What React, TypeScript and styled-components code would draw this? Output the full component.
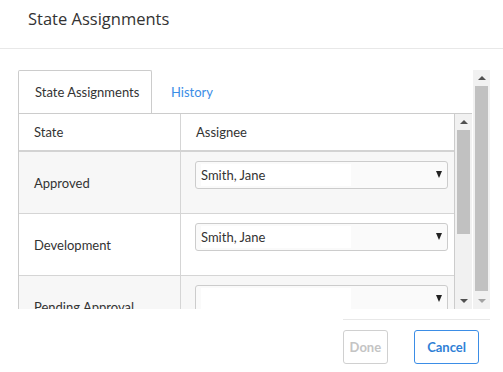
import React from 'react'
import styled, { createGlobalStyle } from 'styled-components'

const GlobalStyle = createGlobalStyle`
    html, body {
        margin: 0;
        padding: 0;
        background: #ffffff;
    }
    body {
        font-family: Lato, 'Liberation Sans', sans-serif;
        color: #333333;
    }
`

const Dialog = styled.div`
    width: 503px;
    height: 372px;
    display: flex;
    flex-direction: column;
    overflow: hidden;
`

const Header = styled.div`
    height: 49px;
    border-bottom: 1px solid #e8e8e8;
    display: flex;
    align-items: center;
    padding-left: 28px;
    padding-bottom: 12px;
    box-sizing: border-box;
`

const Title = styled.h1`
    margin: 0;
    font-family: 'Open Sans', sans-serif;
    font-size: 16.5px;
    font-weight: 400;
    color: #333333;
`

const Body = styled.div`
    display: flex;
    gap: 1px;
    padding: 21px 13px 0 18px;
    height: 239px;
    overflow: hidden;
`

const Panel = styled.div`
    display: flex;
    flex-direction: column;
    width: 454px;
`

const TabRow = styled.div`
    display: flex;
    height: 43px;
    flex-shrink: 0;
`

const Tab = styled.div<{ $active?: boolean }>`
    display: flex;
    align-items: center;
    white-space: nowrap;
    padding: ${(p) => (p.$active ? '0 0 0 16px' : '0 19px')};
    width: ${(p) => (p.$active ? '134px' : 'auto')};
    box-sizing: border-box;
    font-size: 13px;
    color: ${(p) => (p.$active ? '#333333' : '#3b8de6')};
    background: #ffffff;
    border: ${(p) => (p.$active ? '1px solid #cccccc' : 'none')};
    border-bottom: none;
    border-radius: 2px 2px 0 0;
`

const TableArea = styled.div`
    display: flex;
    flex: 1;
    min-height: 0;
    border-top: 1px solid #cccccc;
`

const Table = styled.div`
    width: 437px;
    border-left: 1px solid #cccccc;
    border-right: 1px solid #cccccc;
    box-sizing: border-box;
    overflow: hidden;
`

const Row = styled.div<{ $head?: boolean; $striped?: boolean }>`
    display: grid;
    grid-template-columns: 161px 1fr;
    height: ${(p) => (p.$head ? '36px' : '61px')};
    background: ${(p) => (p.$striped ? '#f7f7f7' : '#ffffff')};
    border-bottom: ${(p) => (p.$head ? '2px solid #d3d3d3' : '1px solid #d5d5d5')};
`

const Cell = styled.div<{ $top?: boolean }>`
    display: flex;
    align-items: ${(p) => (p.$top ? 'flex-start' : 'center')};
    padding: ${(p) => (p.$top ? '9px 7px 0 14px' : '0 15px')};
    font-size: 13px;
    color: #333333;
    & + & {
        border-left: 1px solid #d5d5d5;
    }
`

const Select = styled.div`
    position: relative;
    width: 253px;
    height: 28px;
    box-sizing: border-box;
    border: 1px solid #cccccc;
    border-radius: 3px;
    background: #fafafa;
    display: flex;
    align-items: center;
    padding-left: 5px;
`

const SelectValue = styled.span`
    background: #ffffff;
    width: 150px;
    height: 22px;
    display: flex;
    align-items: center;
    font-size: 13px;
    color: #333333;
`

const Caret = styled.span`
    position: absolute;
    right: 5px;
    top: 9px;
    width: 0;
    height: 0;
    border-left: 3.5px solid transparent;
    border-right: 3.5px solid transparent;
    border-top: 7px solid #222222;
`

const ScrollTrack = styled.div<{ $width: number; $pad: number }>`
    width: ${(p) => p.$width}px;
    flex-shrink: 0;
    background: #f1f1f1;
    display: flex;
    flex-direction: column;
    align-items: center;
    padding: 0 ${(p) => p.$pad}px;
    box-sizing: border-box;
`

const Arrow = styled.div<{ $down?: boolean; $dim?: boolean }>`
    height: 16px;
    width: 100%;
    flex-shrink: 0;
    display: flex;
    align-items: center;
    justify-content: center;
    &::after {
        content: '';
        width: 0;
        height: 0;
        border-left: 4px solid transparent;
        border-right: 4px solid transparent;
        ${(p) => (p.$down ? 'border-top' : 'border-bottom')}: 4px solid
            ${(p) => (p.$dim ? '#a3a3a3' : '#505050')};
    }
`

const Thumb = styled.div<{ $height: number }>`
    width: 100%;
    height: ${(p) => p.$height}px;
    background: #c1c1c1;
    flex-shrink: 0;
`

const Spacer = styled.div`
    flex: 1;
`

const Footer = styled.div`
    display: flex;
    justify-content: flex-end;
    padding: 10px 13px 0 0;
`

const ButtonBar = styled.div`
    display: flex;
    gap: 26px;
    border-top: 1px solid #e8e8e8;
    padding: 10px 11px 0 0;
`

const Button = styled.button<{ $disabled?: boolean }>`
    height: 34px;
    padding: 0 ${(p) => (p.$disabled ? '6px' : '12px')};
    font-family: Lato, 'Liberation Sans', sans-serif;
    font-size: 13px;
    font-weight: 700;
    background: #ffffff;
    border-radius: 3px;
    border: 1px solid ${(p) => (p.$disabled ? '#d0d0d0' : '#3b8de6')};
    color: ${(p) => (p.$disabled ? '#c4c4c4' : '#2f7fd6')};
    cursor: ${(p) => (p.$disabled ? 'default' : 'pointer')};
`

const rows = [
    { state: 'Approved', assignee: 'Smith, Jane' },
    { state: 'Development', assignee: 'Smith, Jane' },
    { state: 'Pending Approval', assignee: '' },
]

const App = () => {
    return (
        <Dialog>
            <GlobalStyle />
            <Header>
                <Title>State Assignments</Title>
            </Header>
            <Body>
                <Panel>
                    <TabRow>
                        <Tab $active>State Assignments</Tab>
                        <Tab>History</Tab>
                    </TabRow>
                    <TableArea>
                        <Table>
                            <Row $head>
                                <Cell>State</Cell>
                                <Cell>Assignee</Cell>
                            </Row>
                            {rows.map((row, i) => (
                                <Row key={row.state} $striped={i % 2 === 0}>
                                    <Cell>{row.state}</Cell>
                                    <Cell $top>
                                        <Select>
                                            <SelectValue>{row.assignee}</SelectValue>
                                            <Caret />
                                        </Select>
                                    </Cell>
                                </Row>
                            ))}
                        </Table>
                        <ScrollTrack $width={17} $pad={2}>
                            <Arrow />
                            <Thumb $height={104} />
                            <Spacer />
                            <Arrow $down />
                        </ScrollTrack>
                    </TableArea>
                </Panel>
                <ScrollTrack $width={17} $pad={2}>
                    <Arrow />
                    <Thumb $height={205} />
                    <Spacer />
                    <Arrow $down $dim />
                </ScrollTrack>
            </Body>
            <Footer>
                <ButtonBar>
                    <Button $disabled>Done</Button>
                    <Button>Cancel</Button>
                </ButtonBar>
            </Footer>
        </Dialog>
    )
}

export default App
